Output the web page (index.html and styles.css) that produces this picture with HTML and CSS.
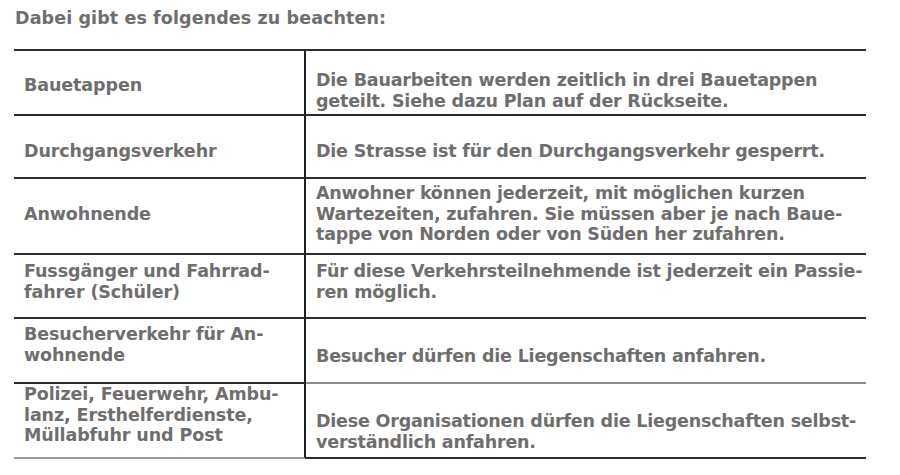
FILE: index.html
```html
<!DOCTYPE html>
<html lang="de">
<head>
<meta charset="utf-8">
<title>Bauetappen</title>
<link rel="stylesheet" href="styles.css">
</head>
<body>
<main class="page">
  <p class="intro">Dabei gibt es folgendes zu beachten:</p>
  <div class="rules">
    <div class="cell key r1">Bauetappen</div>
    <div class="cell val r1">Die Bauarbeiten werden zeitlich in drei Bauetappen<br>geteilt. Siehe dazu Plan auf der Rückseite.</div>

    <div class="cell key r2">Durchgangsverkehr</div>
    <div class="cell val r2">Die Strasse ist für den Durchgangsverkehr gesperrt.</div>

    <div class="cell key r3">Anwohnende</div>
    <div class="cell val r3">Anwohner können jederzeit, mit möglichen kurzen<br>Wartezeiten, zufahren. Sie müssen aber je nach Baue-<br>tappe von Norden oder von Süden her zufahren.</div>

    <div class="cell key r4">Fussgänger und Fahrrad-<br>fahrer (Schüler)</div>
    <div class="cell val r4">Für diese Verkehrsteilnehmende ist jederzeit ein Passie-<br>ren möglich.</div>

    <div class="cell key r5">Besucherverkehr für An-<br>wohnende</div>
    <div class="cell val r5">Besucher dürfen die Liegenschaften anfahren.</div>

    <div class="cell key r6">Polizei, Feuerwehr, Ambu-<br>lanz, Ersthelferdienste,<br>Müllabfuhr und Post</div>
    <div class="cell val r6">Diese Organisationen dürfen die Liegenschaften selbst-<br>verständlich anfahren.</div>
  </div>
</main>
</body>
</html>
```

FILE: styles.css
```css
html, body {
  margin: 0;
  padding: 0;
  background: #ffffff;
}

.page {
  padding: 8px 0 0 14px;
  font-family: "DejaVu Sans", "Liberation Sans", sans-serif;
  font-weight: bold;
  font-size: 17.5px;
  line-height: 20.5px;
  letter-spacing: -0.1px;
  color: #6e6e6e;
}

.intro {
  margin: 0 0 20.5px 1px;
  white-space: nowrap;
  letter-spacing: 0.1px;
}

.rules {
  display: grid;
  width: 852px;
  grid-template-columns: 292px 560px;
  grid-template-rows: 65px 63px 76px 64px 65px 75px;
  border-top: 2px solid #2c2c2c;
}

.cell {
  box-sizing: border-box;
  border-bottom: 2px solid #2c2c2c;
  padding-left: 10px;
  white-space: nowrap;
}

.key {
  border-right: 2px solid #1e1e1e;
}

.val {
  letter-spacing: -0.2px;
}

.r1.key { padding-top: 24px; }
.r1.val { padding-top: 19px; }
.r2.key, .r2.val { padding-top: 25px; }
.r3.key { padding-top: 25px; }
.r3.val { padding-top: 4px; }
.r4.key, .r4.val { padding-top: 6px; }
.r5.key { padding-top: 5px; }
.r5.val { padding-top: 27px; border-bottom-color: #8c8c8c; }
.r6.key { padding-top: 0; border-bottom-color: #9c9c9c; }
.r6.val { padding-top: 27px; }
```
